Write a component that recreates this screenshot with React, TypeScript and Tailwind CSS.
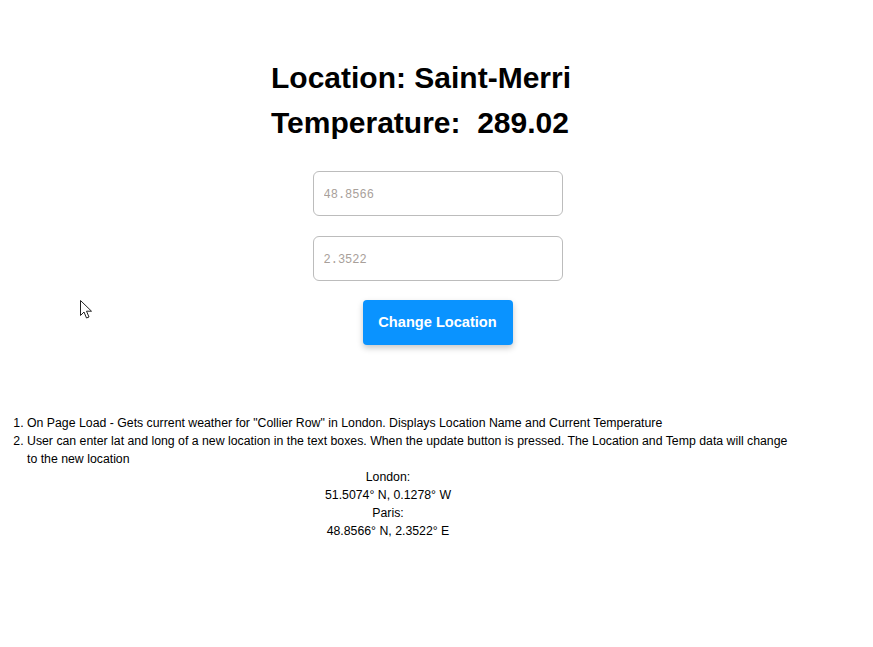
import { useState } from 'react'

const notes = [
  'On Page Load - Gets current weather for "Collier Row" in London. Displays Location Name and Current Temperature',
  'User can enter lat and long of a new location in the text boxes. When the update button is pressed. The Location and Temp data will change to the new location',
]

function Cursor() {
  return (
    <svg
      className="pointer-events-none absolute left-[80px] top-[300px]"
      width="14"
      height="20"
      viewBox="0 0 14 20"
      aria-hidden
    >
      <path
        d="M0.5 0.5 L0.5 15.5 L4 12 L6.5 18 L9 17 L6.5 11.2 L11.5 11.2 Z"
        fill="#fff"
        stroke="#222"
        strokeWidth="1"
        strokeLinejoin="round"
      />
    </svg>
  )
}

export default function App() {
  const [lat, setLat] = useState('')
  const [lon, setLon] = useState('')

  return (
    <div className="relative min-h-[647px] w-[873px] bg-white font-['Liberation_Sans',Arial,sans-serif] text-black">
      <div className="pl-[271px] pt-[55px]">
        <h1 className="text-[30px] font-bold leading-[45px]">Location: Saint-Merri</h1>
        <h2 className="whitespace-pre text-[30px] font-bold leading-[45px]">Temperature:  289.02</h2>
      </div>

      <div className="mt-[26px] flex flex-col items-center pl-[2px]">
        <input
          value={lat}
          onChange={(e) => setLat(e.target.value)}
          placeholder="48.8566"
          className="h-[45px] w-[250px] rounded-[6px] border border-[#bcbcbc] px-[10px] pt-[2px] font-['Liberation_Mono',monospace] text-[12px] outline-none placeholder:text-[#a8a09a]"
        />
        <input
          value={lon}
          onChange={(e) => setLon(e.target.value)}
          placeholder="2.3522"
          className="mt-[20px] h-[45px] w-[250px] rounded-[6px] border border-[#bcbcbc] px-[10px] pt-[2px] font-['Liberation_Mono',monospace] text-[12px] outline-none placeholder:text-[#a8a09a]"
        />
        <button className="mt-[19px] h-[45px] w-[150px] rounded-[4px] bg-[#0a93ff] pt-[1px] text-[14.6px] font-bold text-white shadow-[0_3px_6px_rgba(0,0,0,0.22)]">
          Change Location
        </button>
      </div>

      <ol className="mt-[69px] w-[792px] list-decimal pl-[27px] text-[12.3px] leading-[18px]">
        {notes.map((n) => (
          <li key={n}>{n}</li>
        ))}
      </ol>
      <div className="w-[776px] text-center text-[12.3px] leading-[18px]">
        <p>London:</p>
        <p>51.5074° N, 0.1278° W</p>
        <p>Paris:</p>
        <p>48.8566° N, 2.3522° E</p>
      </div>

      <Cursor />
    </div>
  )
}
